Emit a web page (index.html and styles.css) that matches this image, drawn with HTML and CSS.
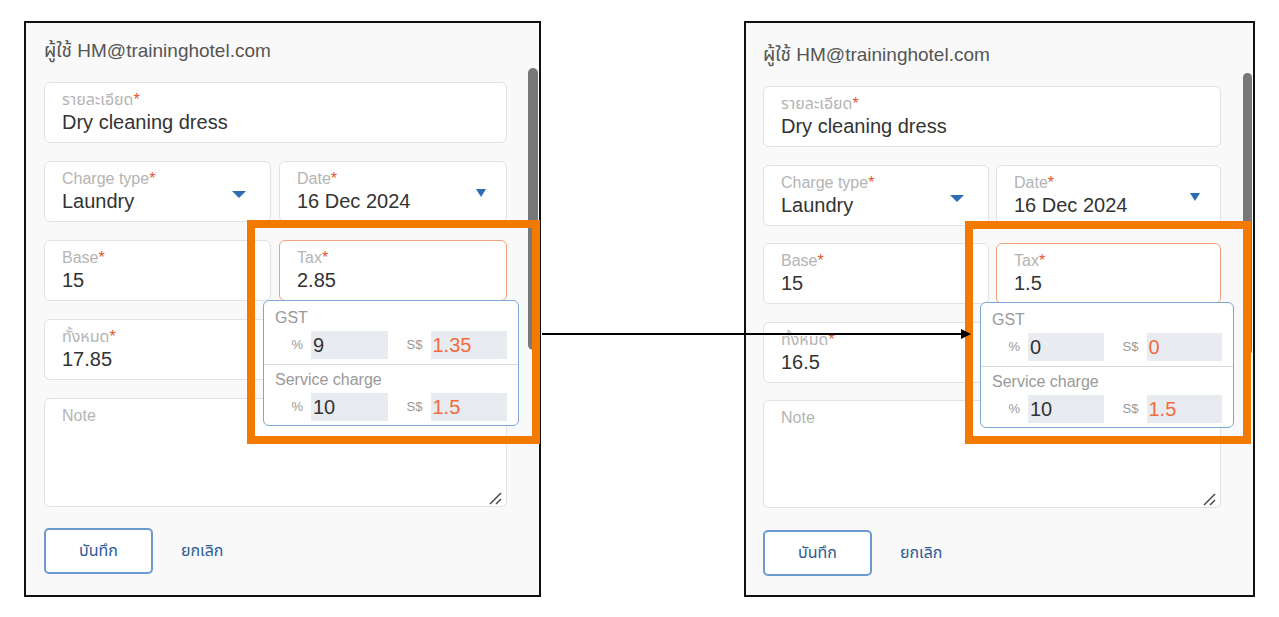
FILE: index.html
```html
<!DOCTYPE html>
<html lang="th">
<head>
    <meta charset="UTF-8">
    <title>Tax breakdown</title>
    <link rel="stylesheet" href="styles.css">
</head>
<body>
    <div class="stage">

        <!-- Before -->
        <div class="panel">
            <div class="form">
                <div class="user">ผู้ใช้ HM@traininghotel.com</div>
                <div class="rows">
                    <div class="field">
                        <label>รายละเอียด<span class="req">*</span></label>
                        <div class="value">Dry cleaning dress</div>
                    </div>
                    <div class="row">
                        <div class="field select">
                            <div class="field-text">
                                <label>Charge type<span class="req">*</span></label>
                                <div class="value">Laundry</div>
                            </div>
                            <span class="caret wide"></span>
                        </div>
                        <div class="field select">
                            <div class="field-text">
                                <label>Date<span class="req">*</span></label>
                                <div class="value">16 Dec 2024</div>
                            </div>
                            <span class="caret small"></span>
                        </div>
                    </div>
                    <div class="row">
                        <div class="field">
                            <label>Base<span class="req">*</span></label>
                            <div class="value">15</div>
                        </div>
                        <div class="field tax">
                            <label>Tax<span class="req">*</span></label>
                            <div class="value">2.85</div>
                            <div class="breakdown">
                                <div class="section">
                                    <div class="section-title">GST</div>
                                    <div class="pair">
                                        <span class="unit">%</span>
                                        <span class="box">9</span>
                                        <span class="unit">S$</span>
                                        <span class="box money">1.35</span>
                                    </div>
                                </div>
                                <div class="section">
                                    <div class="section-title">Service charge</div>
                                    <div class="pair">
                                        <span class="unit">%</span>
                                        <span class="box">10</span>
                                        <span class="unit">S$</span>
                                        <span class="box money">1.5</span>
                                    </div>
                                </div>
                            </div>
                        </div>
                    </div>
                    <div class="row">
                        <div class="field">
                            <label>ทั้งหมด<span class="req">*</span></label>
                            <div class="value">17.85</div>
                        </div>
                        <div></div>
                    </div>
                    <div class="field note">
                        <label>Note</label>
                        <svg class="grip" width="14" height="14" viewBox="0 0 14 14">
                            <line x1="13" y1="2" x2="2" y2="13"/>
                            <line x1="13" y1="8" x2="8" y2="13"/>
                        </svg>
                    </div>
                </div>
                <div class="actions">
                    <button class="btn-save">บันทึก</button>
                    <button class="btn-cancel">ยกเลิก</button>
                </div>
            </div>
            <div class="scroll-thumb"></div>
        </div>

        <!-- After -->
        <div class="panel panel-after">
            <div class="form">
                <div class="user">ผู้ใช้ HM@traininghotel.com</div>
                <div class="rows">
                    <div class="field">
                        <label>รายละเอียด<span class="req">*</span></label>
                        <div class="value">Dry cleaning dress</div>
                    </div>
                    <div class="row">
                        <div class="field select">
                            <div class="field-text">
                                <label>Charge type<span class="req">*</span></label>
                                <div class="value">Laundry</div>
                            </div>
                            <span class="caret wide"></span>
                        </div>
                        <div class="field select">
                            <div class="field-text">
                                <label>Date<span class="req">*</span></label>
                                <div class="value">16 Dec 2024</div>
                            </div>
                            <span class="caret small"></span>
                        </div>
                    </div>
                    <div class="row">
                        <div class="field">
                            <label>Base<span class="req">*</span></label>
                            <div class="value">15</div>
                        </div>
                        <div class="field tax">
                            <label>Tax<span class="req">*</span></label>
                            <div class="value">1.5</div>
                            <div class="breakdown">
                                <div class="section">
                                    <div class="section-title">GST</div>
                                    <div class="pair">
                                        <span class="unit">%</span>
                                        <span class="box">0</span>
                                        <span class="unit">S$</span>
                                        <span class="box money">0</span>
                                    </div>
                                </div>
                                <div class="section">
                                    <div class="section-title">Service charge</div>
                                    <div class="pair">
                                        <span class="unit">%</span>
                                        <span class="box">10</span>
                                        <span class="unit">S$</span>
                                        <span class="box money">1.5</span>
                                    </div>
                                </div>
                            </div>
                        </div>
                    </div>
                    <div class="row">
                        <div class="field">
                            <label>ทั้งหมด<span class="req">*</span></label>
                            <div class="value">16.5</div>
                        </div>
                        <div></div>
                    </div>
                    <div class="field note">
                        <label>Note</label>
                        <svg class="grip" width="14" height="14" viewBox="0 0 14 14">
                            <line x1="13" y1="2" x2="2" y2="13"/>
                            <line x1="13" y1="8" x2="8" y2="13"/>
                        </svg>
                    </div>
                </div>
                <div class="actions">
                    <button class="btn-save">บันทึก</button>
                    <button class="btn-cancel">ยกเลิก</button>
                </div>
            </div>
            <div class="scroll-thumb"></div>
        </div>

        <!-- Annotations -->
        <div class="highlight highlight-before"></div>
        <div class="highlight highlight-after"></div>
        <svg class="arrow" width="430" height="12" viewBox="0 0 430 12">
            <line x1="0" y1="6" x2="420" y2="6"/>
            <polygon points="419,1 429,6 419,11"/>
        </svg>
    </div>
</body>
</html>
```

FILE: styles.css
```css
* {
    box-sizing: border-box;
}

body {
    margin: 0;
    background: #fff;
    font-family: "Liberation Sans", Arial, "Noto Sans Thai", "Noto Sans", sans-serif;
}

.stage {
    position: relative;
    width: 1279px;
    height: 617px;
    display: flex;
    align-items: flex-start;
    gap: 203px;
    padding: 21px 0 0 24px;
}

/* Panel */
.panel {
    width: 517px;
    height: 576px;
    border: 2px solid #111;
    background: #f9f9f9;
    display: flex;
    align-items: flex-start;
    overflow: hidden;
}

.form {
    width: 463px;
    margin-left: 18px;
    padding-top: 16px;
    flex-shrink: 0;
}

.scroll-thumb {
    width: 10px;
    height: 282px;
    margin: 45px 0 0 21px;
    background: #787878;
    border-radius: 5px;
    flex-shrink: 0;
}

.panel-after {
    width: 511px;
}

.panel-after .form {
    width: 458px;
    margin-left: 17px;
    padding-top: 20px;
}

.panel-after .scroll-thumb {
    width: 9px;
    margin: 50px 0 0 22px;
}

.user {
    font-size: 19px;
    line-height: 24px;
    color: #555;
    margin-bottom: 19px;
}

.rows {
    display: flex;
    flex-direction: column;
    gap: 18px;
}

.panel-after .rows {
    gap: 17.5px;
}

.row {
    display: grid;
    grid-template-columns: 227px 228px;
    gap: 8px;
}

.panel-after .row {
    grid-template-columns: 226px 225px;
    gap: 7px;
}

/* Fields */
.field {
    position: relative;
    height: 61px;
    background: #fff;
    border: 1px solid #e2e2e2;
    border-radius: 6px;
    padding: 7px 17px 0;
}

.field label {
    display: block;
    font-size: 16px;
    line-height: 20px;
    color: #b4b4b4;
}

.req {
    color: #e4572e;
}

.value {
    font-size: 20px;
    line-height: 24px;
    color: #333;
}

.field.select {
    display: flex;
    align-items: flex-start;
}

.field-text {
    flex: 1;
}

.caret {
    width: 0;
    height: 0;
    border-top: 7px solid #2c6db4;
    border-left: 7.5px solid transparent;
    border-right: 7.5px solid transparent;
    margin: 22px 7px 0 0;
}

.caret.small {
    border-top-width: 8px;
    border-left-width: 5px;
    border-right-width: 5px;
    margin: 20px 3px 0 0;
}

.field.tax {
    border: 1.5px solid #f2a07c;
}

.field.note {
    height: 109px;
    display: flex;
    flex-direction: column;
}

.panel-after .field.note {
    height: 108px;
}

.grip {
    margin-top: auto;
    align-self: flex-end;
    margin-right: -13px;
    margin-bottom: 1px;
}

.grip line {
    stroke: #444;
    stroke-width: 1.4;
}

/* Tax breakdown dropdown */
.breakdown {
    position: absolute;
    left: -17px;
    top: 59px;
    width: 256px;
    background: #fff;
    border: 1.5px solid #7ea7d3;
    border-radius: 6px;
    z-index: 2;
}

.panel-after .breakdown {
    width: 254px;
    top: 58px;
}

.section {
    padding: 7px 11px 5px;
}

.section + .section {
    border-top: 1px solid #dadada;
    padding-top: 5px;
    padding-bottom: 4px;
}

.section-title {
    font-size: 16px;
    line-height: 20px;
    color: #999;
    margin-bottom: 3px;
}

.pair {
    display: grid;
    grid-template-columns: 36px 1fr 43px 1fr;
    height: 28px;
}

.unit {
    text-align: right;
    padding-right: 8px;
    font-size: 13px;
    line-height: 28px;
    color: #999;
}

.box {
    background: #e8ecf1;
    font-size: 20px;
    line-height: 28px;
    padding-left: 2px;
    color: #333;
}

.box.money {
    color: #f26b3c;
}

/* Buttons */
.actions {
    display: flex;
    align-items: center;
    gap: 28px;
    margin-top: 21px;
}

.panel-after .actions {
    margin-top: 22px;
}

.btn-save {
    width: 109px;
    height: 46px;
    background: #fff;
    border: 2px solid #6a9ad0;
    border-radius: 5px;
    color: #2d5a96;
    font-family: inherit;
    font-size: 16px;
    cursor: pointer;
}

.btn-cancel {
    background: none;
    border: none;
    padding: 0;
    color: #2d5a96;
    font-family: inherit;
    font-size: 16px;
    cursor: pointer;
}

/* Annotations */
.highlight {
    position: absolute;
    border: 8px solid #f27a00;
    z-index: 3;
}

.highlight-before {
    left: 247px;
    top: 220px;
    width: 293px;
    height: 224px;
}

.highlight-after {
    left: 965px;
    top: 221px;
    width: 286px;
    height: 223px;
}

.arrow {
    position: absolute;
    left: 542px;
    top: 328px;
    z-index: 4;
}

.arrow line {
    stroke: #000;
    stroke-width: 2;
}

.arrow polygon {
    fill: #000;
}
```
